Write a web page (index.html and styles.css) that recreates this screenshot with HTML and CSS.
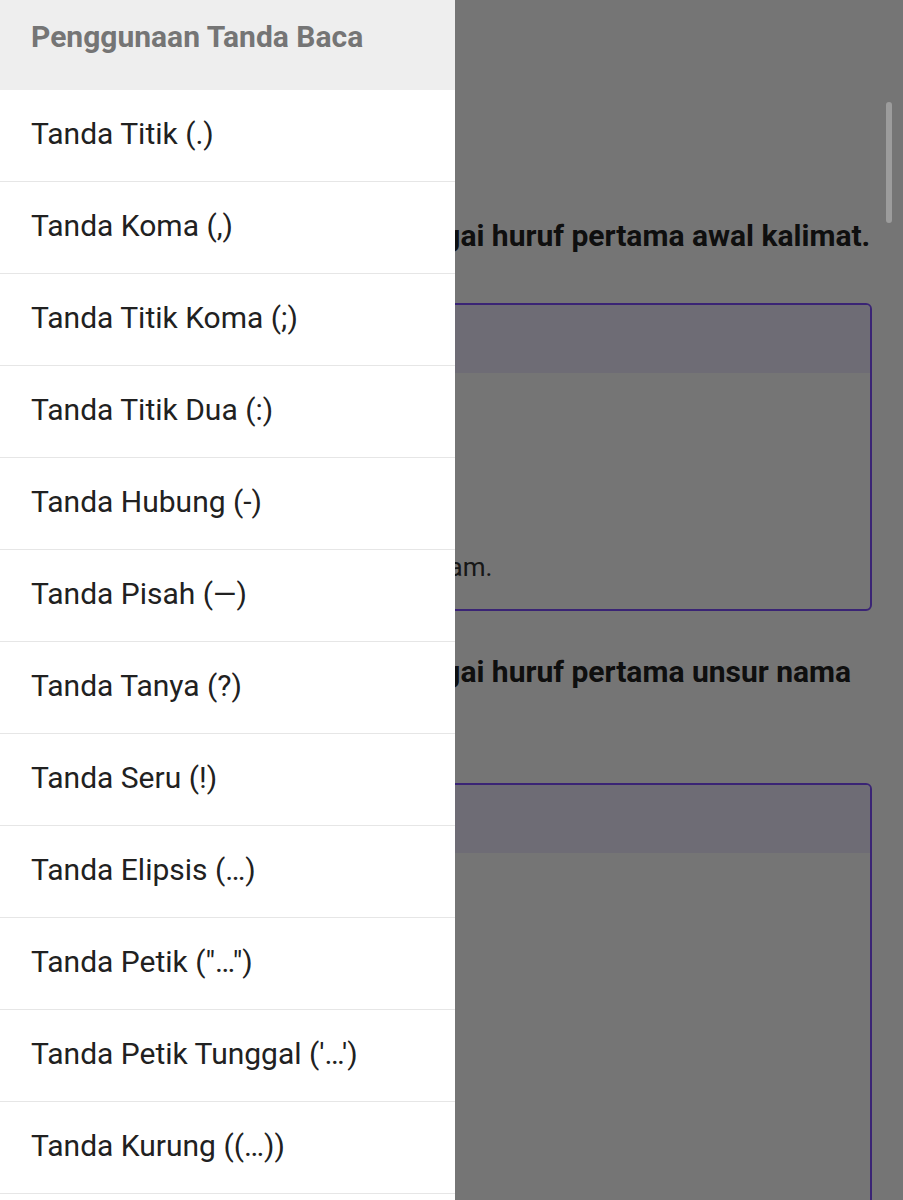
FILE: index.html
```html
<!DOCTYPE html>
<html lang="id">
<head>
<meta charset="utf-8">
<title>Penggunaan Tanda Baca</title>
<link rel="stylesheet" href="styles.css">
</head>
<body>
<main class="page">
  <h1 class="page-title">Huruf Kapital</h1>
  <div class="rule"><span class="rule-num">1.</span><p class="rule-text">Huruf kapital dipakai sebagai huruf pertama awal kalimat.</p></div>
  <section class="card">
    <div class="card-head"></div>
    <div class="card-body">
      <p>Misalnya:</p>
      <p>Dia mengantuk.</p>
      <p>Apa maksudnya?</p>
      <p>Kita harus bekerja keras.</p>
      <p>Kami berangkat ke kota pada malam.</p>
    </div>
  </section>
  <div class="rule"><span class="rule-num">2.</span><p class="rule-text">Huruf kapital dipakai sebagai huruf pertama unsur nama orang.</p></div>
  <section class="card">
    <div class="card-head"></div>
    <div class="card-body">
      <p>Misalnya:</p>
      <p>Amir Hamzah</p>
      <p>Dewi Sartika</p>
      <p>Halim Perdanakusumah</p>
      <p>Wage Rudolf Supratman</p>
      <p>Jenderal Kancil</p>
      <p>Dewa Pedang</p>
      <p>Mujair</p>
      <p>Ampere</p>
    </div>
  </section>
</main>

<div class="scrim"></div>
<div class="scroll-thumb"></div>

<nav class="drawer">
  <div class="drawer-head">Penggunaan Tanda Baca</div>
  <ul class="drawer-list">
    <li class="drawer-item">Tanda Titik (.)</li>
    <li class="drawer-item">Tanda Koma (,)</li>
    <li class="drawer-item">Tanda Titik Koma (;)</li>
    <li class="drawer-item">Tanda Titik Dua (:)</li>
    <li class="drawer-item">Tanda Hubung (-)</li>
    <li class="drawer-item">Tanda Pisah (—)</li>
    <li class="drawer-item">Tanda Tanya (?)</li>
    <li class="drawer-item">Tanda Seru (!)</li>
    <li class="drawer-item">Tanda Elipsis (…)</li>
    <li class="drawer-item">Tanda Petik ("…")</li>
    <li class="drawer-item">Tanda Petik Tunggal ('…')</li>
    <li class="drawer-item">Tanda Kurung ((…))</li>
    <li class="drawer-item">Tanda Kurung Siku ([…])</li>
  </ul>
</nav>
</body>
</html>
```

FILE: styles.css
```css
html, body {
  margin: 0;
  padding: 0;
}
body {
  font-family: Roboto, "Noto Sans", "Liberation Sans", sans-serif;
  background: #ffffff;
  color: #212121;
  width: 903px;
  height: 1200px;
  overflow: hidden;
}

/* underlying page */
.page {
  padding: 0 31px 0 31px;
}
.page-title {
  margin: 0;
  height: 214px;
  box-sizing: border-box;
  padding-top: 120px;
  font-size: 34px;
  font-weight: 500;
  line-height: 44px;
}
.rule {
  display: flex;
  margin: 0 -20px 45px 0;
  font-size: 30px;
  font-weight: 700;
  line-height: 44px;
  color: #212121;
}
.card + .rule {
  margin-top: 39px;
}
.rule-num {
  flex: none;
  width: 60px;
}
.rule-text {
  margin: 0;
  width: 790px;
}
.card {
  border: 2px solid #7e4fff;
  border-radius: 6px;
  overflow: hidden;
}
.card-head {
  height: 68px;
  background: #efebff;
}
.card-body {
  padding: 32px 24px 24px 30px;
  font-size: 26px;
  line-height: 36px;
  color: #333333;
}
.card-body p {
  margin: 0;
}

/* dim layer */
.scrim {
  position: fixed;
  inset: 0;
  background: rgba(0, 0, 0, 0.54);
  z-index: 1;
}
.scroll-thumb {
  position: fixed;
  top: 102px;
  right: 11px;
  width: 6px;
  height: 121px;
  border-radius: 3px;
  background: #9c9c9c;
  z-index: 2;
}

/* drawer */
.drawer {
  position: fixed;
  top: 0;
  left: 0;
  bottom: 0;
  width: 455px;
  background: #ffffff;
  z-index: 3;
  overflow: hidden;
}
.drawer-head {
  height: 90px;
  box-sizing: border-box;
  padding: 20px 0 0 31px;
  background: #eeeeee;
  color: #757575;
  font-size: 30px;
  font-weight: 700;
  line-height: 34px;
}
.drawer-list {
  list-style: none;
  margin: 0;
  padding: 0;
}
.drawer-item {
  height: 92px;
  box-sizing: border-box;
  display: flex;
  align-items: center;
  padding: 0 0 4px 31px;
  border-bottom: 1px solid #e6e6e6;
  font-size: 30px;
  color: #212121;
}
```
